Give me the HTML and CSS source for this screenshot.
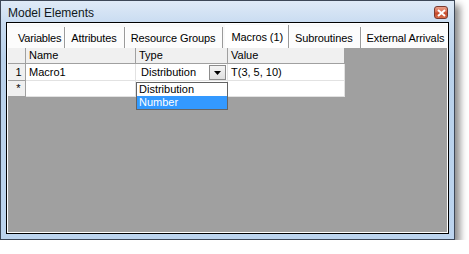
FILE: index.html
```
<!DOCTYPE html>
<html>
<head>
<meta charset="utf-8">
<link rel="stylesheet" href="styles.css">
</head>
<body>
<div class="window">
  <div class="titlebar">
    <span class="title">Model Elements</span>
    <span class="close"><svg width="9" height="8" viewBox="0 0 9 8"><path d="M1 1 L8 7 M8 1 L1 7" stroke="#fff" stroke-width="2"/></svg></span>
  </div>
  <div class="client">
    <div class="inner">
      <div class="tabs">
        <span class="tab first">Variables</span>
        <span class="tab">Attributes</span>
        <span class="tab">Resource Groups</span>
        <span class="tab active">Macros (1)</span>
        <span class="tab">Subroutines</span>
        <span class="tab last">External Arrivals</span>
      </div>
      <div class="page">
        <div class="grid">
          <div class="cell hdr corner"></div>
          <div class="cell hdr">Name</div>
          <div class="cell hdr">Type</div>
          <div class="cell hdr">Value</div>
          <div class="cell rowhdr">1</div>
          <div class="cell">Macro1</div>
          <div class="cell typecell">
            <div class="combo"><span class="combo-text">Distribution</span><span class="combo-btn"><svg width="7" height="4" viewBox="0 0 7 4"><path d="M0 0 H7 L3.5 4 Z" fill="#000"/></svg></span></div>
            <div class="droplist">
              <div class="item">Distribution</div>
              <div class="item sel">Number</div>
            </div>
          </div>
          <div class="cell">T(3, 5, 10)</div>
          <div class="cell rowhdr newrow">*</div>
          <div class="cell newrow"></div>
          <div class="cell newrow"></div>
          <div class="cell newrow"></div>
        </div>
      </div>
    </div>
  </div>
</div>
</body>
</html>
```
FILE: styles.css
```
html, body { margin: 0; padding: 0; background: #fff; }
body { font-family: "Liberation Sans", Arial, sans-serif; font-size: 11px; color: #000; }

.window {
  width: 455px; height: 240px; box-sizing: border-box;
  border: 1px solid #3d4757;
  background: linear-gradient(to bottom, #dfeaf7 0px, #c9dcf1 22px, #b9d1ea 60px, #bcd4ee 100%);
  padding: 0 5px 5px 5px;
  display: flex; flex-direction: column;
  box-shadow: 5px 5px 7px rgba(0,0,0,0.45);
}
.titlebar {
  height: 21px; display: flex; align-items: center; justify-content: space-between;
  padding-left: 2px;
}
.title { font-size: 12px; color: #101820; position: relative; top: 1px; }
.close {
  width: 14px; height: 13px; box-sizing: border-box; margin-right: 1px;
  border: 1px solid #7a3a30; border-radius: 3px;
  background: linear-gradient(to bottom, #eaa08a 0%, #d9694e 45%, #c44a2c 55%, #d86a48 100%);
  display: flex; align-items: center; justify-content: center;
  position: relative; top: 1px;
}
.client { flex: 1; min-width: 0; border: 1px solid #000; display: flex; }
.inner { flex: 1; min-width: 0; border: 1px solid #fff; display: flex; flex-direction: column; background: #a0a0a0; }

.tabs {
  height: 24px; background: #f9f9f9; display: flex; align-items: flex-end;
  overflow: hidden; white-space: nowrap; min-width: 0;
}
.tab {
  flex-shrink: 0;
  height: 21px; box-sizing: border-box; padding: 0 7px 0 5px; line-height: 22px;
  letter-spacing: -0.1px; background: #fcfcfc;
  border-left: 1px solid #fff;
  border-right: 1px solid #9a9a9a;
}
.tab.first { padding-left: 10px; padding-right: 3px; letter-spacing: -0.2px; border-left: none; }
.tab.active {
  background: #fff; height: 23px; line-height: 24px;
  margin-left: 2px; padding-right: 5px;
}
.tab.last { border-right: none; }

.page { flex: 1; background: #a0a0a0; }
.grid {
  display: grid;
  grid-template-columns: 18px 110px 92px 117px;
  grid-template-rows: 16px 17px 16px;
  width: max-content;
}
.cell {
  box-sizing: border-box; background: #fff;
  border-right: 1px solid #e2e2e2; border-bottom: 1px solid #e2e2e2;
  padding-left: 3px; line-height: 16px; white-space: nowrap; position: relative;
}
.hdr { background: #f0f0f0; border-right: 1px solid #a0a0a0; border-bottom: 1px solid #a0a0a0; line-height: 15px; }
.corner { background: #f0f0f0; }
.rowhdr { background: #f0f0f0; border-right: 1px solid #a0a0a0; border-bottom: 1px solid #a0a0a0; text-align: center; padding-left: 4px; }
.newrow { line-height: 15px; }
.typecell { padding: 0; }
.combo {
  margin: 1px 1px 0 1px; height: 15px; box-sizing: border-box;
  display: flex; background: #fff;
}
.combo-text { flex: 1; padding-left: 4px; line-height: 15px; }
.combo-btn {
  width: 17px; box-sizing: border-box; background: linear-gradient(#f4f4f4, #e0e0e0);
  border: 1px solid #8c8c8c; display: flex; align-items: center; justify-content: center;
}
.droplist {
  position: absolute; left: 0; top: 18px; width: 92px; box-sizing: border-box;
  border: 1px solid #646464; background: #fff; z-index: 2;
}
.item { height: 13px; line-height: 13px; padding-left: 2px; }
.item.sel { background: #3399ff; color: #fff; }
```
